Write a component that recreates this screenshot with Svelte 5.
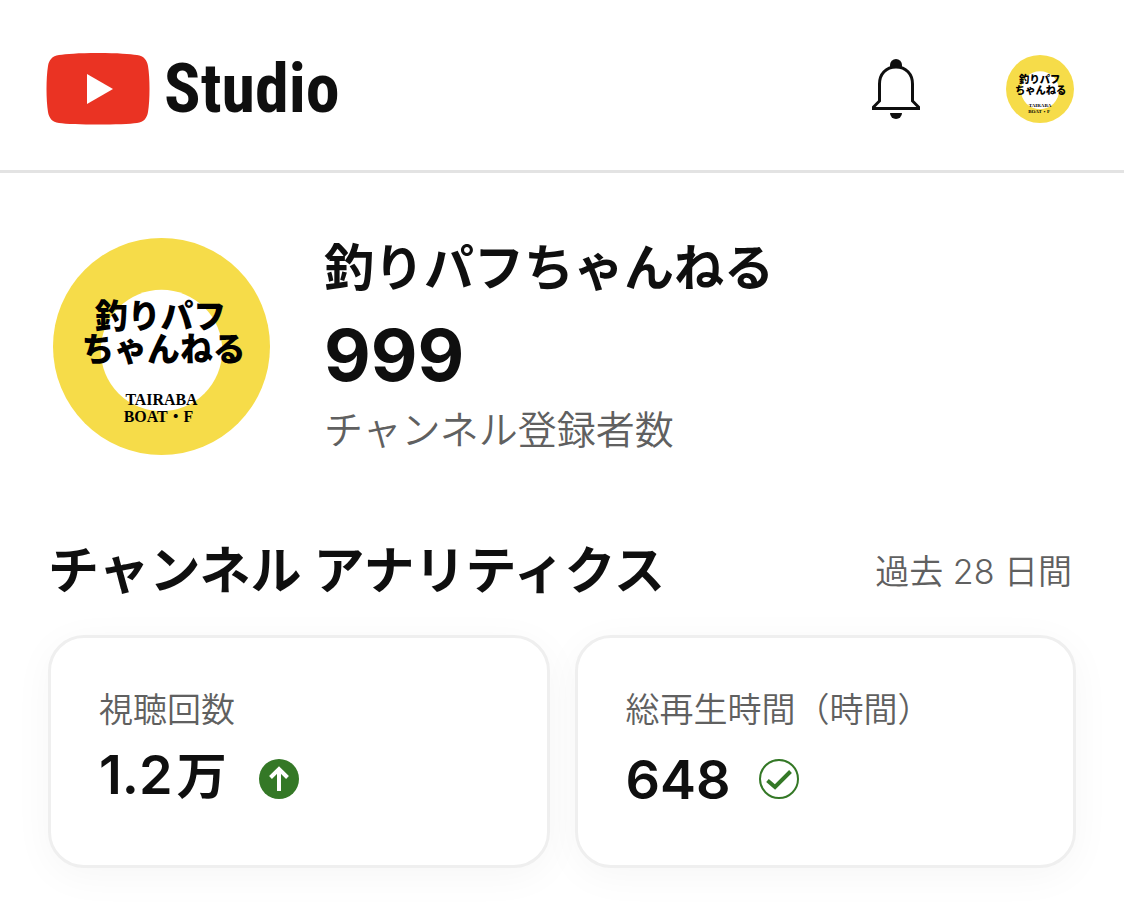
<script>
	const channel = {
		name: '釣りパフちゃんねる',
		subscribers: 999
	};

	const metrics = [
		{ label: '視聴回数', value: '1.2', unit: '万', trend: 'up' },
		{ label: '総再生時間（時間）', value: '648', unit: '', trend: 'steady' }
	];
</script>

{#snippet avatar()}
	<svg class="avatar" viewBox="0 0 218 218" role="img" aria-label={channel.name}>
		<circle cx="109" cy="109" r="109" fill="#f6dc49" />
		<circle cx="109" cy="113" r="61" fill="#fff" />
		<g class="brush">
			<text x="108" y="90">釣りパフ</text>
			<text x="111" y="124">ちゃんねる</text>
		</g>
		<g class="roman">
			<text x="109" y="168">TAIRABA</text>
			<text x="106" y="185">BOAT・F</text>
		</g>
	</svg>
{/snippet}

<header>
	<a class="logo" href="/" aria-label="Studio">
		<svg width="104" height="72" viewBox="0 0 104 72" aria-hidden="true">
			<path
				d="M52 0C72 0 84 1 91 2C98 3 101 7 102 13C104 25 104 47 102 59C101 65 98 69 91 70C78 72 26 72 13 70C6 69 3 65 2 59C0 47 0 25 2 13C3 7 6 3 13 2C20 1 32 0 52 0Z"
				fill="#ea3323"
			/>
			<path d="M41 21L67 36L41 51Z" fill="#fff" />
		</svg>
		<span>Studio</span>
	</a>
	<div class="actions">
		<button type="button" aria-label="通知">
			<svg width="48" height="60" viewBox="0 0 48 60">
				<path d="M18 8V6a6 6 0 0 1 12 0V8z" fill="#0f0f0f" />
				<path
					d="M24 8C14 8 7.500 15 7.500 25V42L1.500 48V49.500H46.500V48L40.500 42V25C40.500 15 34 8 24 8Z"
					fill="none"
					stroke="#0f0f0f"
					stroke-width="3"
				/>
				<path d="M18 54h12a6 6 0 0 1-12 0z" fill="#0f0f0f" />
			</svg>
		</button>
		<button type="button" class="account" aria-label="アカウント">
			{@render avatar()}
		</button>
	</div>
</header>

<main>
	<section class="channel">
		<div class="portrait">{@render avatar()}</div>
		<div>
			<h1>{channel.name}</h1>
			<p class="count">{channel.subscribers}</p>
			<p class="caption">チャンネル登録者数</p>
		</div>
	</section>

	<section>
		<div class="heading">
			<h2>チャンネル アナリティクス</h2>
			<span>過去 28 日間</span>
		</div>
		<div class="cards">
			{#each metrics as metric}
				<article>
					<h3>{metric.label}</h3>
					<p class="value">
						<span>{metric.value}{#if metric.unit}<span class="unit">{metric.unit}</span>{/if}</span>
						<svg width="40" height="40" viewBox="0 0 40 40" aria-hidden="true">
							{#if metric.trend === 'up'}
								<circle cx="20" cy="20" r="20" fill="#347826" />
								<path d="M20 32V10M11.500 18.500L20 10L28.500 18.500" fill="none" stroke="#fff" stroke-width="4" />
							{:else}
								<circle cx="20" cy="20" r="19" fill="none" stroke="#347826" stroke-width="2" />
								<path d="M8.500 21.500L16 28L31.500 12.500" fill="none" stroke="#347826" stroke-width="4" />
							{/if}
						</svg>
					</p>
				</article>
			{/each}
		</div>
	</section>
</main>

<style>
	:global(body) {
		margin: 0;
		background: #fff;
		color: #0f0f0f;
		font-family: Inter, 'Noto Sans CJK JP', sans-serif;
	}
	h1,
	h2,
	h3,
	p {
		margin: 0;
	}
	svg {
		display: block;
		flex: none;
	}
	button {
		padding: 0;
		border: 0;
		background: none;
		cursor: pointer;
	}
	header {
		display: flex;
		align-items: center;
		justify-content: space-between;
		box-sizing: border-box;
		height: 173px;
		padding: 8px 50px 0 46px;
		border-bottom: 3px solid #e3e3e3;
	}
	.logo {
		display: flex;
		align-items: center;
		gap: 14px;
		color: #0f0f0f;
		text-decoration: none;
		font: 700 68px/72px 'Roboto Condensed', 'Liberation Sans Narrow', sans-serif;
	}
	.actions {
		display: flex;
		align-items: center;
		gap: 86px;
	}
	.account {
		width: 68px;
	}
	.avatar {
		width: 100%;
		height: auto;
	}
	.avatar text {
		text-anchor: middle;
	}
	.brush {
		font: 900 33px 'Noto Sans CJK JP', sans-serif;
	}
	.roman {
		font: 700 16px 'Liberation Serif', 'Noto Sans CJK JP', serif;
	}
	main {
		padding: 65px 48px 42px;
	}
	.channel {
		display: flex;
		align-items: flex-start;
		gap: 54px;
		padding-left: 5px;
	}
	.portrait {
		width: 217px;
	}
	h1,
	h2 {
		font-weight: 700;
		line-height: 60px;
	}
	h1 {
		font-size: 50px;
	}
	h2 {
		font-size: 51px;
	}
	.count {
		font-size: 72px;
		font-weight: 700;
		line-height: 114px;
	}
	.caption {
		color: #606060;
		font-size: 39px;
		font-weight: 350;
		line-height: 36px;
	}
	.heading {
		display: flex;
		align-items: center;
		justify-content: space-between;
		margin: 86px 4px 34px 0;
	}
	.heading span {
		padding-bottom: 4px;
		color: #606060;
		font-size: 34px;
		font-weight: 350;
	}
	.cards {
		display: grid;
		grid-template-columns: 1fr 1fr;
		gap: 25px;
	}
	article {
		padding: 48px 48px 53px;
		border: 3px solid #efefef;
		border-radius: 36px;
		background: #fff;
		box-shadow: 0 8px 40px rgba(0, 0, 0, 0.04);
	}
	h3 {
		color: #606060;
		font-size: 34px;
		font-weight: 350;
		line-height: 48px;
	}
	.value {
		display: flex;
		align-items: flex-end;
		gap: 28px;
		height: 78px;
		font-size: 54px;
		font-weight: 600;
	}
	.value svg {
		margin-bottom: 13px;
	}
	.unit {
		margin: 0 4px;
		font-size: 50px;
		font-weight: 700;
		line-height: 72px;
	}
</style>
